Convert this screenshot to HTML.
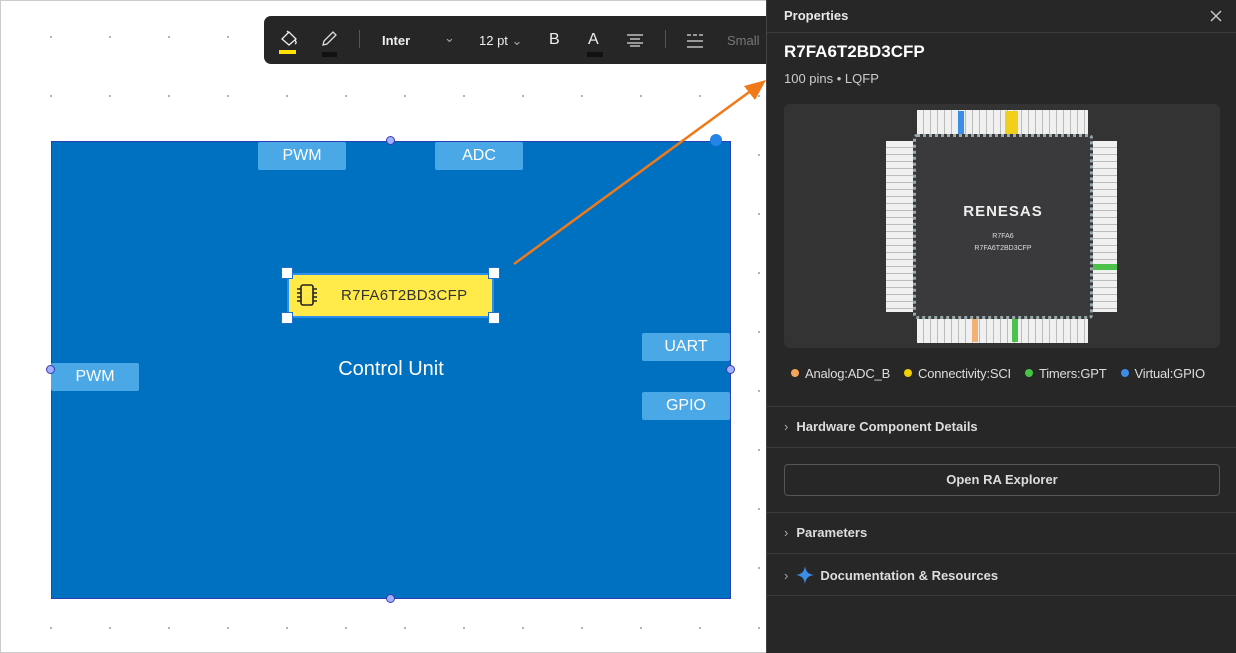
<!DOCTYPE html>
<html><head><meta charset="utf-8"><style>
*{margin:0;padding:0;box-sizing:border-box}
body{width:1236px;height:653px;overflow:hidden;background:#fff;font-family:"Liberation Sans",sans-serif;position:relative}
.abs{position:absolute}
.port{position:absolute;background:#4aa8e6;color:#fff;font-size:16px;text-align:center;line-height:28px;height:28px;width:88px;border-radius:2px}
.hd{position:absolute;width:9px;height:9px;border-radius:50%;background:#9fb0ff;border:1.5px solid #3a3ab0}
.sq{position:absolute;width:12px;height:12px;background:#fff;border:1px solid #1e6fd0}
.panel{position:absolute;left:766px;top:0;width:470px;height:653px;background:#272727;color:#e8e8e8;border-left:1px solid #444}
.line{position:absolute;left:0;width:470px;height:1px;background:#3c3c3c}
.acc{position:absolute;left:17px;font-size:13px;font-weight:bold;color:#ddd}
.leg{display:inline-block;font-size:13px;color:#ddd;margin-right:14px}
.leg i{display:inline-block;width:8px;height:8px;border-radius:50%;margin-right:6px;vertical-align:1px}
</style></head><body>
<div class="abs" style="left:0;top:0;width:766px;height:653px;border:1px solid #ccc;border-right:none"></div>
<svg class="abs" style="left:0;top:0" width="766" height="653" fill="#9a9a9a">
<circle cx="51" cy="37" r="1"/><circle cx="110" cy="37" r="1"/><circle cx="169" cy="37" r="1"/><circle cx="228" cy="37" r="1"/>
<circle cx="51" cy="96" r="1"/><circle cx="110" cy="96" r="1"/><circle cx="169" cy="96" r="1"/><circle cx="228" cy="96" r="1"/><circle cx="287" cy="96" r="1"/><circle cx="346" cy="96" r="1"/><circle cx="405" cy="96" r="1"/><circle cx="464" cy="96" r="1"/><circle cx="523" cy="96" r="1"/><circle cx="582" cy="96" r="1"/><circle cx="641" cy="96" r="1"/><circle cx="700" cy="96" r="1"/><circle cx="759" cy="96" r="1"/>
<circle cx="759" cy="155" r="1"/><circle cx="759" cy="214" r="1"/><circle cx="759" cy="273" r="1"/><circle cx="759" cy="332" r="1"/><circle cx="759" cy="391" r="1"/><circle cx="759" cy="450" r="1"/><circle cx="759" cy="509" r="1"/><circle cx="759" cy="568" r="1"/>
<circle cx="51" cy="628" r="1"/><circle cx="110" cy="628" r="1"/><circle cx="169" cy="628" r="1"/><circle cx="228" cy="628" r="1"/><circle cx="287" cy="628" r="1"/><circle cx="346" cy="628" r="1"/><circle cx="405" cy="628" r="1"/><circle cx="464" cy="628" r="1"/><circle cx="523" cy="628" r="1"/><circle cx="582" cy="628" r="1"/><circle cx="641" cy="628" r="1"/><circle cx="700" cy="628" r="1"/><circle cx="759" cy="628" r="1"/>
</svg>
<div class="abs" style="left:51px;top:141px;width:680px;height:458px;background:#0070c0;border:1px solid #2b3fb5"></div>
<div class="port" style="left:258px;top:142px">PWM</div>
<div class="port" style="left:435px;top:142px">ADC</div>
<div class="port" style="left:642px;top:333px">UART</div>
<div class="port" style="left:642px;top:392px">GPIO</div>
<div class="port" style="left:51px;top:363px">PWM</div>
<div class="hd" style="left:386px;top:136px"></div>
<div class="hd" style="left:46px;top:365px"></div>
<div class="hd" style="left:726px;top:365px"></div>
<div class="hd" style="left:386px;top:594px"></div>
<div class="abs" style="left:710px;top:134px;width:12px;height:12px;border-radius:50%;background:#2384e8"></div>
<div class="abs" style="left:0;top:358px;width:782px;text-align:center;color:#fff;font-size:20px">Control Unit</div>
<div class="abs" style="left:287px;top:273px;width:207px;height:45px;background:#ffea4a;border:2px solid #2a90f0"></div>
<svg class="abs" style="left:294px;top:282px" width="26" height="26" fill="none" stroke="#222" stroke-width="1.6"><rect x="7" y="3" width="12" height="20" rx="2"/><path d="M3 7h4M3 11h4M3 15h4M3 19h4M19 7h4M19 11h4M19 15h4M19 19h4"/></svg>
<div class="abs" style="left:341px;top:287px;font-size:15px;color:#333;letter-spacing:.3px">R7FA6T2BD3CFP</div>
<div class="sq" style="left:281px;top:267px"></div><div class="sq" style="left:488px;top:267px"></div>
<div class="sq" style="left:281px;top:312px"></div><div class="sq" style="left:488px;top:312px"></div>
<svg class="abs" style="left:0;top:0" width="780" height="653"><line x1="514" y1="264" x2="752" y2="90" stroke="#f07a1a" stroke-width="2.5"/><polygon points="766,80 744,86 755,100" fill="#f07a1a"/></svg>
<div class="abs" style="left:264px;top:16px;width:510px;height:48px;background:#262626;border-radius:7px;color:#eee;font-size:13px">
<svg class="abs" style="left:14px;top:12px" width="22" height="26" fill="none" stroke="#eee" stroke-width="1.3"><path d="M4 11l7-7 7 7-7 6z M9 3l2 2 M17 12c1 2 2 3 0 4"/><rect x="1" y="22" width="17" height="5" fill="#ffe100" stroke="none"/></svg>
<svg class="abs" style="left:56px;top:14px" width="18" height="18" fill="none" stroke="#ddd" stroke-width="1.3"><path d="M3 15l1-4 9-9 3 3-9 9z"/></svg>
<div class="abs" style="left:58px;top:36px;width:15px;height:5px;background:#111"></div>
<div class="abs" style="left:95px;top:14px;width:1px;height:18px;background:#555"></div>
<div class="abs" style="left:118px;top:17px;font-weight:bold">Inter</div>
<div class="abs" style="left:180px;top:14px;color:#aaa">⌄</div>
<div class="abs" style="left:215px;top:17px">12 pt <span style="color:#aaa">⌄</span></div>
<div class="abs" style="left:285px;top:15px;font-size:16px">B</div>
<div class="abs" style="left:324px;top:15px;font-size:16px">A</div>
<div class="abs" style="left:323px;top:36px;width:16px;height:5px;background:#111"></div>
<svg class="abs" style="left:362px;top:17px" width="18" height="14" stroke="#ddd" stroke-width="1.2"><path d="M1 2h16M4 6h10M1 10h16M4 13h10"/></svg>
<div class="abs" style="left:401px;top:14px;width:1px;height:18px;background:#555"></div>
<svg class="abs" style="left:422px;top:17px" width="18" height="16" stroke="#ddd" stroke-width="1.3"><path d="M1 2h4M7 2h4M13 2h4M1 8h16M1 14h16" /></svg>
<div class="abs" style="left:463px;top:17px;color:#777">Small</div>
</div>
<div class="panel">
<div class="abs" style="left:17px;top:8px;font-size:13px;font-weight:bold">Properties</div>
<svg class="abs" style="left:442px;top:9px" width="14" height="14" stroke="#ccc" stroke-width="1.4"><path d="M2 2l10 10M12 2L2 12"/></svg>
<div class="line" style="top:32px"></div>
<div class="abs" style="left:17px;top:42px;font-size:17px;font-weight:bold;color:#fff">R7FA6T2BD3CFP</div>
<div class="abs" style="left:17px;top:71px;font-size:13px;color:#ccc">100 pins • LQFP</div>
<div class="abs" style="left:17px;top:104px;width:436px;height:244px;background:#333;border-radius:6px"></div>
<div class="abs" style="left:150px;top:110px;width:171px;height:24px;background:repeating-linear-gradient(90deg,#f0f0f0 0 6px,#bbb 6px 7px)"></div>
<div class="abs" style="left:150px;top:319px;width:171px;height:24px;background:repeating-linear-gradient(90deg,#f0f0f0 0 6px,#bbb 6px 7px)"></div>
<div class="abs" style="left:119px;top:141px;width:28px;height:171px;background:repeating-linear-gradient(180deg,#f0f0f0 0 6px,#bbb 6px 7px)"></div>
<div class="abs" style="left:326px;top:141px;width:24px;height:171px;background:repeating-linear-gradient(180deg,#f0f0f0 0 6px,#bbb 6px 7px)"></div>
<div class="abs" style="left:191px;top:111px;width:6px;height:23px;background:#3b8de8"></div>
<div class="abs" style="left:238px;top:111px;width:13px;height:23px;background:#f2cf1a"></div>
<div class="abs" style="left:205px;top:319px;width:6px;height:23px;background:#f2b072"></div>
<div class="abs" style="left:245px;top:319px;width:6px;height:23px;background:#4cc24c"></div>
<div class="abs" style="left:326px;top:264px;width:24px;height:6px;background:#4cc24c"></div>
<div class="abs" style="left:146px;top:134px;width:180px;height:185px;background:#3a3a3c;border-radius:4px;border:3px dotted #9aa"></div>
<div class="abs" style="left:146px;top:203px;width:180px;text-align:center;color:#eee;font-size:15px;font-weight:bold;letter-spacing:1px">RENESAS</div>
<div class="abs" style="left:146px;top:231px;width:180px;text-align:center;color:#ddd;font-size:7px;line-height:12px">R7FA6<br>R7FA6T2BD3CFP</div>
<div class="abs" style="left:24px;top:365px;white-space:nowrap;letter-spacing:-0.2px"><span class="leg"><i style="background:#f5a55a"></i>Analog:ADC_B</span><span class="leg"><i style="background:#f2d000"></i>Connectivity:SCI</span><span class="leg"><i style="background:#44c444"></i>Timers:GPT</span><span class="leg" style="margin-right:0"><i style="background:#3b8de8"></i>Virtual:GPIO</span></div>
<div class="line" style="top:406px"></div>
<div class="acc" style="top:419px"><span style="color:#aaa;margin-right:8px;font-weight:normal">›</span>Hardware Component Details</div>
<div class="line" style="top:447px"></div>
<div class="abs" style="left:17px;top:464px;width:436px;height:32px;border:1px solid #555;border-radius:4px;text-align:center;line-height:30px;font-size:13px;font-weight:bold;color:#ddd">Open RA Explorer</div>
<div class="line" style="top:512px"></div>
<div class="acc" style="top:525px"><span style="color:#aaa;margin-right:8px;font-weight:normal">›</span>Parameters</div>
<div class="line" style="top:553px"></div>
<div class="acc" style="top:566px"><span style="color:#aaa;margin-right:8px;font-weight:normal">›</span><svg width="18" height="18" style="vertical-align:-4px;margin-right:6px"><path d="M9 0C10 6 12 8 18 9 12 10 10 12 9 18 8 12 6 10 0 9 6 8 8 6 9 0z" fill="#3b8de8"/></svg>Documentation &amp; Resources</div>
<div class="line" style="top:595px"></div>
</div>
</body></html>
